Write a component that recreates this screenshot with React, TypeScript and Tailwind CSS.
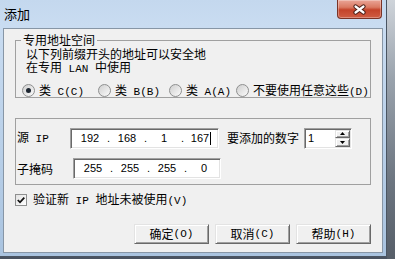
import React from 'react'

// splits CJK and ASCII runs so latin gets the narrow mono face like SimSun
function Txt({ s }: { s: string }) {
  const parts = s.match(/[\x00-\x7f]+|[^\x00-\x7f]+/g) || []
  return (
    <>
      {parts.map((p, i) =>
        /^[\x00-\x7f]/.test(p) ? (
          <span key={i} className="whitespace-pre font-['Liberation_Mono',monospace] text-[11px]">{p}</span>
        ) : (
          <span key={i}>{p}</span>
        )
      )}
    </>
  )
}

function Radio({ checked }: { checked?: boolean }) {
  return (
    <span className="flex h-[13px] w-[13px] shrink-0 items-center justify-center rounded-full border border-[#8e8f8f] bg-[linear-gradient(135deg,#cfcfcf,#fbfbfb)]">
      {checked && <span className="h-[5px] w-[5px] rounded-full bg-[#1c2530]" />}
    </span>
  )
}

const sunken =
  'border border-t-[#a0a0a0] border-l-[#a0a0a0] border-r-white border-b-white bg-white shadow-[inset_1px_1px_0_#696969,inset_-1px_-1px_0_#e3e3e3]'

const raised =
  'border border-t-[#e3e3e3] border-l-[#e3e3e3] border-r-[#696969] border-b-[#696969] bg-[#f0f0f0] shadow-[inset_1px_1px_0_#fff,inset_-1px_-1px_0_#a0a0a0]'

const radios = [
  { label: '类 C(C)', w: 'w-[76px]', checked: true },
  { label: '类 B(B)', w: 'w-[71px]' },
  { label: '类 A(A)', w: 'w-[67px]' },
  { label: '不要使用任意这些(D)', w: 'w-auto' },
]

export default function App() {
  const ip = ['192', '168', '1', '167']
  const mask = ['255', '255', '255', '0']

  return (
    <div className="flex h-[259px] w-[395px] overflow-hidden bg-[#4a5360] font-['Noto_Sans_CJK_SC',sans-serif] text-[12px] text-black">
      <div className="flex h-[257px] w-[387px] flex-col border-r border-b border-[#4a5562] bg-[linear-gradient(180deg,#c4d8ee_0%,#c9dcf1_10%,#b8cfe8_60%,#a9c3df_100%)] px-[3px]">
        {/* title bar */}
        <div className="flex h-[28px] items-start justify-between">
          <span className="self-center pl-[1px] text-[13px] leading-[14px]">添加</span>
          <div className="mr-[1px] flex h-[19px] w-[45px] items-center justify-center rounded-b-[4px] border border-t-0 border-[#7a3326] bg-[linear-gradient(180deg,#eaa597_0%,#da7a63_40%,#c4432a_55%,#cf5d43_100%)] shadow-[inset_0_0_0_1px_rgba(255,255,255,0.3)]">
            <svg width="15" height="11" viewBox="0 0 15 11">
              <path d="M3.5 2.5 L11.5 8.5 M11.5 2.5 L3.5 8.5" stroke="#4a1e16" strokeWidth="4.2" strokeLinecap="round" />
              <path d="M3.5 2.5 L11.5 8.5 M11.5 2.5 L3.5 8.5" stroke="#fff" strokeWidth="2.2" strokeLinecap="round" />
            </svg>
          </div>
        </div>

        {/* client */}
        <div className="flex h-[225px] flex-col border border-[#8796a6] bg-[#f0f0f0]">
          <fieldset className="mx-[11px] mt-[4px] border border-[#a0a0a0] px-0 pb-0">
            <legend className="ml-[5px] px-[2px] leading-[14px]">专用地址空间</legend>
            <div className="pl-[10px] leading-[13px]">
              <div>以下列前缀开头的地址可以安全地</div>
              <div><Txt s="在专用 LAN 中使用" /></div>
            </div>
            <div className="mt-[8px] flex h-[13px] items-center pl-[6px] leading-[13px]">
              {radios.map((r) => (
                <label key={r.label} className={`flex items-center gap-[4px] ${r.w}`}>
                  <Radio checked={r.checked} />
                  <span className="whitespace-nowrap"><Txt s={r.label} /></span>
                </label>
              ))}
            </div>
          </fieldset>

          <div className="mx-[11px] mt-[20px] h-[67px] border border-[#a0a0a0] pt-[8px] pl-[1px]">
            <div className="flex h-[22px] items-center">
              <span className="w-[53px] leading-[14px]"><Txt s="源 IP" /></span>
              <div className={`flex h-[21px] w-[149px] items-center pl-[3px] font-['Liberation_Sans',sans-serif] text-[11px] ${sunken}`}>
                {ip.map((n, i) => (
                  <React.Fragment key={i}>
                    <span className="w-[32px] text-center">
                      {n}
                      {i === 3 && <span className="ml-[1px] inline-block h-[13px] w-px bg-black align-middle" />}
                    </span>
                    {i < 3 && <span className="w-[5px] text-center">.</span>}
                  </React.Fragment>
                ))}
              </div>
              <span className="ml-[8px] leading-[14px]">要添加的数字</span>
              <div className={`ml-[5px] flex h-[21px] w-[48px] ${sunken}`}>
                <span className="flex-1 pl-[3px] font-['Liberation_Sans',sans-serif] text-[11px] leading-[19px]">1</span>
                <div className="flex w-[16px] flex-col p-[1px] pl-0">
                  <div className={`flex flex-1 items-center justify-center ${raised}`}>
                    <svg width="5" height="3" viewBox="0 0 5 3"><path d="M0 3 L2.5 0 L5 3 Z" fill="#000" /></svg>
                  </div>
                  <div className={`flex flex-1 items-center justify-center ${raised}`}>
                    <svg width="5" height="3" viewBox="0 0 5 3"><path d="M0 0 L5 0 L2.5 3 Z" fill="#000" /></svg>
                  </div>
                </div>
              </div>
            </div>
            <div className="mt-[9px] flex h-[21px] items-center">
              <span className="w-[56px] leading-[14px]">子掩码</span>
              <div className={`flex h-[21px] w-[148px] items-center pl-[3px] font-['Liberation_Sans',sans-serif] text-[11px] ${sunken}`}>
                {mask.map((n, i) => (
                  <React.Fragment key={i}>
                    <span className="w-[32px] text-center">{n}</span>
                    {i < 3 && <span className="w-[5px] text-center">.</span>}
                  </React.Fragment>
                ))}
              </div>
            </div>
          </div>

          <label className="ml-[11px] mt-[8px] flex h-[13px] items-center gap-[6px] leading-[13px]">
            <span className="flex h-[12px] w-[12px] items-center justify-center border border-[#8e8f8f] bg-[linear-gradient(135deg,#e2e2e2,#fff)]">
              <svg width="10" height="10" viewBox="0 0 10 10">
                <path d="M1.8 5 L4 7.3 L8.3 2.6" stroke="#111" strokeWidth="1.8" fill="none" />
              </svg>
            </span>
            <span className="whitespace-nowrap"><Txt s="验证新 IP 地址未被使用(V)" /></span>
          </label>

          <div className="mt-[18px] flex justify-end gap-[6px] pr-[11px]">
            {['确定(O)', '取消(C)', '帮助(H)'].map((b) => (
              <button key={b} className={`flex h-[20px] w-[75px] items-center justify-center leading-[14px] ${raised}`}>
                <Txt s={b} />
              </button>
            ))}
          </div>
        </div>
      </div>
      <div className="h-full flex-1 bg-[linear-gradient(180deg,#cfd4da_0%,#9aa3ad_30%,#6c7580_70%,#565e68_100%)]" />
    </div>
  )
}
